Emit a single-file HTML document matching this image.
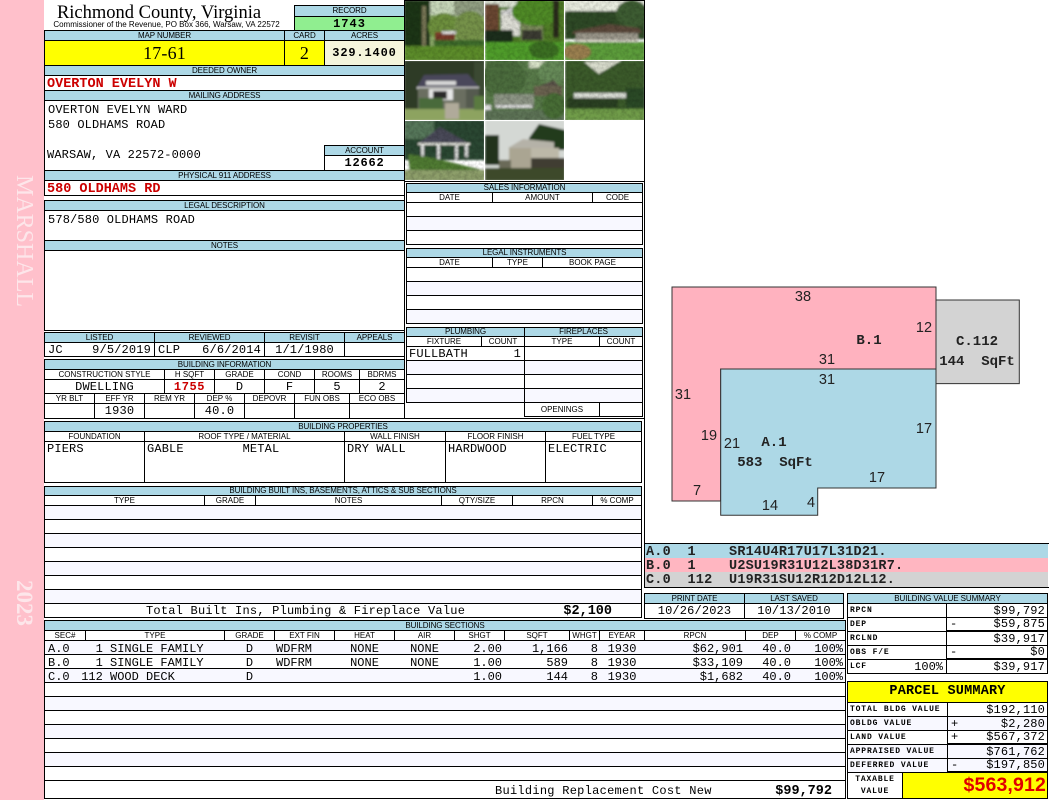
<!DOCTYPE html>
<html><head><meta charset="utf-8"><title>Richmond County, Virginia</title>
<style>
html,body{margin:0;padding:0;background:#fff}
#p{position:relative;width:1050px;height:800px;overflow:hidden;background:#fff;font-family:"Liberation Sans",sans-serif;color:#000}
#p div{position:absolute;box-sizing:border-box;white-space:pre;display:flex;align-items:center;justify-content:center;overflow:hidden}
.b{border:1px solid #000}
.h{border:1px solid #000;background:#add8e6;font:8px/1 "Liberation Sans",sans-serif;letter-spacing:-.1px}
.c{border:1px solid #000;background:#fff;font:8px/1 "Liberation Sans",sans-serif;letter-spacing:0}
.m{border:1px solid #000;background:#fff;font:12px/1 "Liberation Mono",monospace;letter-spacing:.15px}
.a{background:#f8f8ff}
.l{justify-content:flex-start!important;padding-left:2px}
.r{justify-content:flex-end!important;padding-right:2px}
.sb{justify-content:space-between!important;padding-left:3px}
.t{align-items:flex-start!important;padding-top:1px}
.red{color:#cc0000;font-weight:bold;font-size:13.5px!important;letter-spacing:0!important;padding-top:3px}
.s{font-size:8px;font-family:"Liberation Mono",monospace;font-weight:bold;letter-spacing:.85px}
.x{font:12px/1 "Liberation Mono",monospace;height:14px;padding-top:2px}
.k{left:645px;width:403px;justify-content:flex-start!important;font:bold 13.5px/1 "Liberation Mono",monospace;letter-spacing:.2px;color:#222;padding-left:1px;padding-top:3px}
svg{position:absolute}
</style></head><body><div id="p">

<div style="left:0;top:0;width:44px;height:800px;background:#ffc0cb"></div>
<div style="left:11px;top:171px;width:26px;height:140px;writing-mode:vertical-rl;font:24px/26px 'Liberation Serif',serif;color:#fde6ea">MARSHALL</div>
<div style="left:11px;top:578px;width:26px;height:50px;writing-mode:vertical-rl;font:bold 23px/26px 'Liberation Serif',serif;color:#fde6ea">2023</div>

<div style="left:44px;top:3px;width:230px;height:20px;font:18.5px/1 'Liberation Serif',serif">Richmond County, Virginia</div>
<div style="left:44px;top:20px;width:245px;height:10px;font:8px/1 'Liberation Sans',sans-serif;letter-spacing:0">Commissioner of the Revenue, PO Box 366, Warsaw, VA 22572</div>

<div class="h" style="left:294px;top:5px;width:111px;height:12px">RECORD</div>
<div class="m" style="left:294px;top:16px;width:111px;height:15px;background:#90ee90;font-weight:bold;letter-spacing:1px">1743</div>

<div class="h" style="left:44px;top:30px;width:241px;height:11px">MAP NUMBER</div>
<div class="h" style="left:284px;top:30px;width:41px;height:11px">CARD</div>
<div class="h" style="left:324px;top:30px;width:81px;height:11px">ACRES</div>
<div class="m" style="left:44px;top:40px;width:241px;height:26px;background:#ff0;font:18px/1 'Liberation Serif',serif">17-61</div>
<div class="m" style="left:284px;top:40px;width:41px;height:26px;background:#ff0;font:18px/1 'Liberation Serif',serif">2</div>
<div class="m" style="left:324px;top:40px;width:81px;height:26px;background:#f5f5dc;font-weight:bold;letter-spacing:.85px">329.1400</div>

<div class="h" style="left:44px;top:65px;width:361px;height:11px">DEEDED OWNER</div>
<div class="m l red" style="left:44px;top:75px;width:361px;height:16px">OVERTON EVELYN W</div>
<div class="h" style="left:44px;top:90px;width:361px;height:11px">MAILING ADDRESS</div>
<div class="m" style="left:44px;top:100px;width:361px;height:71px"></div>
<div style="left:48px;top:103px;width:200px;height:14px;justify-content:flex-start;font:12px/1 'Liberation Mono',monospace;letter-spacing:.13px">OVERTON EVELYN WARD</div>
<div style="left:48px;top:118px;width:200px;height:14px;justify-content:flex-start;font:12px/1 'Liberation Mono',monospace;letter-spacing:.13px">580 OLDHAMS ROAD</div>
<div style="left:47px;top:148px;width:220px;height:14px;justify-content:flex-start;font:12px/1 'Liberation Mono',monospace;letter-spacing:.13px">WARSAW, VA 22572-0000</div>
<div class="h" style="left:324px;top:145px;width:81px;height:11px">ACCOUNT</div>
<div class="m" style="left:324px;top:155px;width:81px;height:16px;font-weight:bold;letter-spacing:.8px">12662</div>
<div class="h" style="left:44px;top:170px;width:361px;height:11px">PHYSICAL 911 ADDRESS</div>
<div class="m l red" style="left:44px;top:180px;width:361px;height:16px">580 OLDHAMS RD</div>

<div class="h" style="left:44px;top:200px;width:361px;height:11px">LEGAL DESCRIPTION</div>
<div class="m l t" style="left:44px;top:210px;width:361px;height:31px;padding-left:3px;padding-top:3px">578/580 OLDHAMS ROAD</div>
<div class="h" style="left:44px;top:240px;width:361px;height:11px">NOTES</div>
<div class="m" style="left:44px;top:250px;width:361px;height:81px"></div>

<div class="h" style="left:44px;top:332px;width:111px;height:11px">LISTED</div>
<div class="h" style="left:154px;top:332px;width:111px;height:11px">REVIEWED</div>
<div class="h" style="left:264px;top:332px;width:81px;height:11px">REVISIT</div>
<div class="h" style="left:344px;top:332px;width:61px;height:11px">APPEALS</div>
<div class="m" style="left:44px;top:342px;width:111px;height:15px;padding:0 1px">JC    9/5/2019</div>
<div class="m" style="left:154px;top:342px;width:111px;height:15px;padding:0 1px">CLP   6/6/2014</div>
<div class="m" style="left:264px;top:342px;width:81px;height:15px">1/1/1980</div>
<div class="m" style="left:344px;top:342px;width:61px;height:15px"></div>

<div class="h" style="left:44px;top:359px;width:361px;height:11px">BUILDING INFORMATION</div>
<div class="c" style="left:44px;top:369px;width:121px;height:11px">CONSTRUCTION STYLE</div>
<div class="c" style="left:164px;top:369px;width:51px;height:11px">H SQFT</div>
<div class="c" style="left:214px;top:369px;width:51px;height:11px">GRADE</div>
<div class="c" style="left:264px;top:369px;width:51px;height:11px">COND</div>
<div class="c" style="left:314px;top:369px;width:46px;height:11px">ROOMS</div>
<div class="c" style="left:359px;top:369px;width:46px;height:11px">BDRMS</div>
<div class="m" style="left:44px;top:379px;width:121px;height:15px">DWELLING</div>
<div class="m red" style="left:164px;top:379px;width:51px;height:15px;font-size:12px!important;letter-spacing:.6px!important;padding-top:1px">1755</div>
<div class="m" style="left:214px;top:379px;width:51px;height:15px">D</div>
<div class="m" style="left:264px;top:379px;width:51px;height:15px">F</div>
<div class="m" style="left:314px;top:379px;width:46px;height:15px">5</div>
<div class="m" style="left:359px;top:379px;width:46px;height:15px">2</div>
<div class="c" style="left:44px;top:393px;width:51px;height:11px">YR BLT</div>
<div class="c" style="left:94px;top:393px;width:51px;height:11px">EFF YR</div>
<div class="c" style="left:144px;top:393px;width:51px;height:11px">REM YR</div>
<div class="c" style="left:194px;top:393px;width:51px;height:11px">DEP %</div>
<div class="c" style="left:244px;top:393px;width:51px;height:11px">DEPOVR</div>
<div class="c" style="left:294px;top:393px;width:56px;height:11px">FUN OBS</div>
<div class="c" style="left:349px;top:393px;width:56px;height:11px">ECO OBS</div>
<div class="m" style="left:44px;top:403px;width:51px;height:16px"></div>
<div class="m" style="left:94px;top:403px;width:51px;height:16px">1930</div>
<div class="m" style="left:144px;top:403px;width:51px;height:16px"></div>
<div class="m" style="left:194px;top:403px;width:51px;height:16px">40.0</div>
<div class="m" style="left:244px;top:403px;width:51px;height:16px"></div>
<div class="m" style="left:294px;top:403px;width:56px;height:16px"></div>
<div class="m" style="left:349px;top:403px;width:56px;height:16px"></div>

<div class="h" style="left:44px;top:421px;width:598px;height:11px">BUILDING PROPERTIES</div>
<div class="c" style="left:44px;top:431px;width:101px;height:11px">FOUNDATION</div>
<div class="c" style="left:144px;top:431px;width:201px;height:11px">ROOF TYPE / MATERIAL</div>
<div class="c" style="left:344px;top:431px;width:102px;height:11px">WALL FINISH</div>
<div class="c" style="left:445px;top:431px;width:101px;height:11px">FLOOR FINISH</div>
<div class="c" style="left:545px;top:431px;width:97px;height:11px">FUEL TYPE</div>
<div class="m l t" style="left:44px;top:441px;width:101px;height:42px">PIERS</div>
<div class="m l t" style="left:144px;top:441px;width:201px;height:42px">GABLE        METAL</div>
<div class="m l t" style="left:344px;top:441px;width:102px;height:42px">DRY WALL</div>
<div class="m l t" style="left:445px;top:441px;width:101px;height:42px">HARDWOOD</div>
<div class="m l t" style="left:545px;top:441px;width:97px;height:42px">ELECTRIC</div>

<div class="h" style="left:44px;top:486px;width:598px;height:10px">BUILDING BUILT INS, BASEMENTS, ATTICS &amp; SUB SECTIONS</div>
<div class="c" style="left:44px;top:495px;width:161px;height:11px">TYPE</div>
<div class="c" style="left:204px;top:495px;width:52px;height:11px">GRADE</div>
<div class="c" style="left:255px;top:495px;width:187px;height:11px">NOTES</div>
<div class="c" style="left:441px;top:495px;width:72px;height:11px">QTY/SIZE</div>
<div class="c" style="left:512px;top:495px;width:81px;height:11px">RPCN</div>
<div class="c" style="left:592px;top:495px;width:50px;height:11px">% COMP</div>
<div class="m a" style="left:44px;top:505px;width:598px;height:15px"></div>
<div class="m" style="left:44px;top:519px;width:598px;height:15px"></div>
<div class="m a" style="left:44px;top:533px;width:598px;height:15px"></div>
<div class="m" style="left:44px;top:547px;width:598px;height:15px"></div>
<div class="m a" style="left:44px;top:561px;width:598px;height:15px"></div>
<div class="m" style="left:44px;top:575px;width:598px;height:15px"></div>
<div class="m a" style="left:44px;top:589px;width:598px;height:15px"></div>
<div class="m" style="left:44px;top:603px;width:598px;height:15px"></div>
<div style="left:146px;top:604px;width:330px;height:14px;justify-content:flex-start;font:12px/1 'Liberation Mono',monospace;letter-spacing:.22px">Total Built Ins, Plumbing &amp; Fireplace Value</div>
<div style="left:540px;top:605px;width:72px;height:14px;justify-content:flex-end;font:bold 13.5px/1 'Liberation Mono',monospace">$2,100</div>

<div class="h" style="left:44px;top:620px;width:802px;height:11px">BUILDING SECTIONS</div>
<div class="c" style="left:44px;top:630px;width:42px;height:11px">SEC#</div>
<div class="c" style="left:85px;top:630px;width:140px;height:11px">TYPE</div>
<div class="c" style="left:224px;top:630px;width:51px;height:11px">GRADE</div>
<div class="c" style="left:274px;top:630px;width:61px;height:11px">EXT FIN</div>
<div class="c" style="left:334px;top:630px;width:61px;height:11px">HEAT</div>
<div class="c" style="left:394px;top:630px;width:61px;height:11px">AIR</div>
<div class="c" style="left:454px;top:630px;width:51px;height:11px">SHGT</div>
<div class="c" style="left:504px;top:630px;width:66px;height:11px">SQFT</div>
<div class="c" style="left:569px;top:630px;width:31px;height:11px">WHGT</div>
<div class="c" style="left:599px;top:630px;width:46px;height:11px">EYEAR</div>
<div class="c" style="left:644px;top:630px;width:102px;height:11px">RPCN</div>
<div class="c" style="left:745px;top:630px;width:51px;height:11px">DEP</div>
<div class="c" style="left:795px;top:630px;width:51px;height:11px">% COMP</div>

<div class="m a" style="left:44px;top:640px;width:802px;height:15px"></div>
<div class="m" style="left:44px;top:654px;width:802px;height:15px"></div>
<div class="m a" style="left:44px;top:668px;width:802px;height:15px"></div>
<div class="m" style="left:44px;top:682px;width:802px;height:15px"></div>
<div class="m a" style="left:44px;top:696px;width:802px;height:15px"></div>
<div class="m" style="left:44px;top:710px;width:802px;height:15px"></div>
<div class="m a" style="left:44px;top:724px;width:802px;height:15px"></div>
<div class="m" style="left:44px;top:738px;width:802px;height:15px"></div>
<div class="m a" style="left:44px;top:752px;width:802px;height:15px"></div>
<div class="m" style="left:44px;top:766px;width:802px;height:15px"></div>
<div class="m" style="left:44px;top:780px;width:802px;height:19px"></div>

<!-- section rows -->
<div class="x" style="left:48px;top:641px;width:30px;justify-content:flex-start">A.0</div>
<div class="x" style="left:48px;top:655px;width:30px;justify-content:flex-start">B.0</div>
<div class="x" style="left:48px;top:669px;width:30px;justify-content:flex-start">C.0</div>
<div class="x" style="left:74px;top:641px;width:146px;justify-content:flex-start">   1 SINGLE FAMILY</div>
<div class="x" style="left:74px;top:655px;width:146px;justify-content:flex-start">   1 SINGLE FAMILY</div>
<div class="x" style="left:74px;top:669px;width:146px;justify-content:flex-start"> 112 WOOD DECK</div>
<div class="x" style="left:224px;top:641px;width:51px">D</div>
<div class="x" style="left:224px;top:655px;width:51px">D</div>
<div class="x" style="left:224px;top:669px;width:51px">D</div>
<div class="x" style="left:276px;top:641px;width:60px;justify-content:flex-start">WDFRM</div>
<div class="x" style="left:276px;top:655px;width:60px;justify-content:flex-start">WDFRM</div>
<div class="x" style="left:334px;top:641px;width:61px">NONE</div>
<div class="x" style="left:334px;top:655px;width:61px">NONE</div>
<div class="x" style="left:394px;top:641px;width:61px">NONE</div>
<div class="x" style="left:394px;top:655px;width:61px">NONE</div>
<div class="x" style="left:450px;top:641px;width:52px;justify-content:flex-end">2.00</div>
<div class="x" style="left:450px;top:655px;width:52px;justify-content:flex-end">1.00</div>
<div class="x" style="left:450px;top:669px;width:52px;justify-content:flex-end">1.00</div>
<div class="x" style="left:510px;top:641px;width:58px;justify-content:flex-end">1,166</div>
<div class="x" style="left:510px;top:655px;width:58px;justify-content:flex-end">589</div>
<div class="x" style="left:510px;top:669px;width:58px;justify-content:flex-end">144</div>
<div class="x" style="left:570px;top:641px;width:28px;justify-content:flex-end">8</div>
<div class="x" style="left:570px;top:655px;width:28px;justify-content:flex-end">8</div>
<div class="x" style="left:570px;top:669px;width:28px;justify-content:flex-end">8</div>
<div class="x" style="left:600px;top:641px;width:44px">1930</div>
<div class="x" style="left:600px;top:655px;width:44px">1930</div>
<div class="x" style="left:600px;top:669px;width:44px">1930</div>
<div class="x" style="left:650px;top:641px;width:93px;justify-content:flex-end">$62,901</div>
<div class="x" style="left:650px;top:655px;width:93px;justify-content:flex-end">$33,109</div>
<div class="x" style="left:650px;top:669px;width:93px;justify-content:flex-end">$1,682</div>
<div class="x" style="left:745px;top:641px;width:51px;justify-content:flex-end;padding-right:5px">40.0</div>
<div class="x" style="left:745px;top:655px;width:51px;justify-content:flex-end;padding-right:5px">40.0</div>
<div class="x" style="left:745px;top:669px;width:51px;justify-content:flex-end;padding-right:5px">40.0</div>
<div class="x" style="left:800px;top:641px;width:43px;justify-content:flex-end">100%</div>
<div class="x" style="left:800px;top:655px;width:43px;justify-content:flex-end">100%</div>
<div class="x" style="left:800px;top:669px;width:43px;justify-content:flex-end">100%</div>
<div style="left:495px;top:784px;width:240px;height:14px;justify-content:flex-start;font:12px/1 'Liberation Mono',monospace;letter-spacing:.27px">Building Replacement Cost New</div>
<div style="left:760px;top:785px;width:72px;height:14px;justify-content:flex-end;font:bold 13.5px/1 'Liberation Mono',monospace">$99,792</div>

<!-- photos -->
<svg style="left:404px;top:0" width="241" height="181" viewBox="0 0 241 181">
<defs><filter id="bl" x="-5%" y="-5%" width="110%" height="110%"><feGaussianBlur stdDeviation="1"/></filter>
<filter id="nz" x="0" y="0" width="100%" height="100%"><feTurbulence type="fractalNoise" baseFrequency=".28" numOctaves="2" seed="7"/><feColorMatrix values="0 0 0 0 0  0 0 0 0 0  0 0 0 0 0  1.6 0 0 0 -.55"/></filter>
<clipPath id="c1"><rect x="1" y="1" width="79" height="59"/></clipPath><clipPath id="c2"><rect x="81" y="1" width="79" height="59"/></clipPath><clipPath id="c3"><rect x="161" y="1" width="79" height="59"/></clipPath>
<clipPath id="c4"><rect x="1" y="61" width="79" height="59"/></clipPath><clipPath id="c5"><rect x="81" y="61" width="79" height="59"/></clipPath><clipPath id="c6"><rect x="161" y="61" width="79" height="59"/></clipPath>
<clipPath id="c7"><rect x="1" y="121" width="79" height="59"/></clipPath><clipPath id="c8"><rect x="81" y="121" width="79" height="59"/></clipPath></defs>
<g clip-path="url(#c1)"><g filter="url(#bl)"><rect x="0" y="0" width="81" height="61" fill="#8fae6a"/><rect x="22" y="0" width="30" height="15" fill="#c6d6b8"/><rect x="50" y="0" width="31" height="16" fill="#8f9c80"/><rect x="0" y="0" width="26" height="47" fill="#1f3418"/><ellipse cx="40" cy="27" rx="16" ry="14" fill="#6d8f3e"/><ellipse cx="66" cy="28" rx="16" ry="17" fill="#75914a"/><rect x="18" y="6" width="4" height="46" fill="#7d7a5a"/><rect x="30" y="40" width="51" height="6" fill="#3e6a2c"/><rect x="31" y="32" width="20" height="8" fill="#7a3a2a"/><rect x="38" y="31" width="14" height="3" fill="#ddd"/><rect x="0" y="46" width="81" height="15" fill="#5c8c2c"/></g></g>
<g clip-path="url(#c2)"><g filter="url(#bl)"><rect x="81" y="0" width="80" height="61" fill="#4f7a28"/><rect x="81" y="0" width="32" height="7" fill="#d8e0d0"/><rect x="81" y="4" width="14" height="28" fill="#6b4630"/><rect x="97" y="10" width="19" height="26" fill="#dcdcd4"/><path d="M96 14L107 7L117 14Z" fill="#cfcfcf"/><rect x="117" y="22" width="22" height="18" fill="#7c8a5c"/><rect x="118" y="30" width="20" height="10" fill="#3a3a30"/><rect x="81" y="30" width="28" height="12" fill="#1f2e1a"/><ellipse cx="132" cy="12" rx="24" ry="14" fill="#4f8a28"/><rect x="149" y="0" width="6" height="38" fill="#2a2a1a"/><rect x="81" y="42" width="80" height="19" fill="#4f9c2c"/><ellipse cx="140" cy="50" rx="15" ry="9" fill="#3a6e22"/></g></g>
<g clip-path="url(#c3)"><g filter="url(#bl)"><rect x="161" y="0" width="80" height="15" fill="#e8ecdf"/><rect x="161" y="11" width="80" height="28" fill="#2f4a26"/><ellipse cx="228" cy="14" rx="16" ry="14" fill="#3e5c30"/><path d="M170 31L205 24L235 28L238 33L168 34Z" fill="#5c4a3a"/><rect x="172" y="33" width="62" height="8" fill="#9a968a"/><rect x="174" y="40" width="60" height="2" fill="#e0dcd0"/><rect x="161" y="42" width="80" height="19" fill="#5c9c3a"/><ellipse cx="173" cy="52" rx="14" ry="8" fill="#9a7f50"/></g></g>
<g clip-path="url(#c4)"><g filter="url(#bl)"><rect x="0" y="60" width="81" height="50" fill="#2e3a26"/><rect x="70" y="62" width="11" height="40" fill="#3a4a30"/><path d="M13 87L20 75L64 74L75 87Z" fill="#48475a"/><rect x="13" y="87" width="62" height="2" fill="#ddd"/><rect x="22" y="81" width="30" height="4" fill="#d8d8d8"/><rect x="14" y="88" width="58" height="21" fill="#6a6e60"/><rect x="25" y="89" width="24" height="11" fill="#e6e6e6"/><rect x="29" y="91" width="14" height="8" fill="#2c2c2c"/><rect x="62" y="88" width="13" height="20" fill="#555a50"/><rect x="15" y="98" width="24" height="12" fill="#4a6a3a"/><rect x="0" y="109" width="81" height="12" fill="#8da360"/><rect x="41" y="103" width="14" height="16" fill="#b0aa9a"/><rect x="70" y="96" width="10" height="14" fill="#5a7a40"/></g></g>
<g clip-path="url(#c5)"><g filter="url(#bl)"><rect x="81" y="60" width="80" height="61" fill="#587a4a"/><rect x="125" y="61" width="25" height="7" fill="#d8e2c8"/><ellipse cx="100" cy="78" rx="22" ry="20" fill="#4c6c3c"/><ellipse cx="148" cy="72" rx="14" ry="12" fill="#668a58"/><path d="M130 88L150 80L158 90Z" fill="#5a5248"/><rect x="130" y="86" width="28" height="10" fill="#6a6250"/><rect x="90" y="94" width="40" height="14" fill="#8c9484"/><rect x="92" y="105" width="36" height="3" fill="#dcdcdc"/><rect x="81" y="105" width="6" height="6" fill="#e0e0e0"/><rect x="81" y="110" width="80" height="11" fill="#5d7357"/><ellipse cx="150" cy="106" rx="12" ry="13" fill="#466c34"/></g></g>
<g clip-path="url(#c6)"><g filter="url(#bl)"><rect x="161" y="60" width="80" height="50" fill="#3a5a2a"/><path d="M180 62L218 60L195 74Z" fill="#d8dccc"/><rect x="170" y="93" width="56" height="5" fill="#d8dcd4"/><rect x="164" y="98" width="50" height="10" fill="#2a4020"/><rect x="222" y="88" width="19" height="20" fill="#294a26"/><rect x="161" y="109" width="80" height="12" fill="#6f9c4a"/></g></g>
<g clip-path="url(#c7)"><g filter="url(#bl)"><rect x="0" y="120" width="81" height="40" fill="#2c4630"/><rect x="0" y="121" width="30" height="18" fill="#56775a"/><path d="M36 127L13 144L66 144Z" fill="#4a4a58"/><rect x="14" y="143" width="52" height="2" fill="#e8e8e0"/><rect x="17" y="145" width="3" height="14" fill="#ddd"/><rect x="33" y="145" width="3" height="18" fill="#ddd"/><rect x="51" y="145" width="3" height="14" fill="#ddd"/><rect x="61" y="145" width="3" height="12" fill="#ddd"/><path d="M4 154L30 158L78 170L6 172Z" fill="#4f7a30"/><rect x="0" y="170" width="81" height="11" fill="#8d9e6a"/></g></g>
<g clip-path="url(#c8)"><g filter="url(#bl)"><rect x="81" y="120" width="80" height="61" fill="#d4d8d4"/><rect x="81" y="135" width="14" height="30" fill="#22301c"/><path d="M125 138L135 124L161 130L161 150L125 150Z" fill="#233a1c"/><path d="M104 148L119 139L150 142L150 148Z" fill="#b5b2a8"/><rect x="105" y="148" width="22" height="22" fill="#aaa592"/><rect x="127" y="148" width="28" height="10" fill="#bcb8a8"/><rect x="127" y="158" width="34" height="10" fill="#403c30"/><rect x="95" y="160" width="12" height="10" fill="#6a6a58"/><rect x="81" y="168" width="80" height="13" fill="#3e4a2c"/></g></g>
<g clip-path="url(#c1)"><rect x="1" y="1" width="79" height="59" filter="url(#nz)" opacity=".2"/></g>
<g clip-path="url(#c2)"><rect x="81" y="1" width="79" height="59" filter="url(#nz)" opacity=".2"/></g>
<g clip-path="url(#c3)"><rect x="161" y="1" width="79" height="59" filter="url(#nz)" opacity=".2"/></g>
<g clip-path="url(#c5)"><rect x="81" y="61" width="79" height="59" filter="url(#nz)" opacity=".2"/></g>
<g clip-path="url(#c6)"><rect x="161" y="61" width="79" height="59" filter="url(#nz)" opacity=".2"/></g>
<g clip-path="url(#c7)"><rect x="1" y="121" width="79" height="59" filter="url(#nz)" opacity=".2"/></g>
</svg>

<div style="left:404px;top:0;width:241px;height:1px;background:#000"></div>
<div style="left:404px;top:0;width:1px;height:181px;background:#000"></div>
<div style="left:644px;top:0;width:1px;height:545px;background:#000"></div>

<!-- Sales -->
<div class="b" style="left:404px;top:181px;width:241px;height:238px;background:none"></div>
<div class="h" style="left:406px;top:183px;width:237px;height:10px">SALES INFORMATION</div>
<div class="c" style="left:406px;top:192px;width:87px;height:11px">DATE</div>
<div class="c" style="left:492px;top:192px;width:101px;height:11px">AMOUNT</div>
<div class="c" style="left:592px;top:192px;width:51px;height:11px">CODE</div>
<div class="m" style="left:406px;top:202px;width:237px;height:15px"></div>
<div class="m a" style="left:406px;top:216px;width:237px;height:15px"></div>
<div class="m" style="left:406px;top:230px;width:237px;height:15px"></div>
<div class="h" style="left:406px;top:248px;width:237px;height:10px">LEGAL INSTRUMENTS</div>
<div class="c" style="left:406px;top:257px;width:87px;height:11px">DATE</div>
<div class="c" style="left:492px;top:257px;width:51px;height:11px">TYPE</div>
<div class="c" style="left:542px;top:257px;width:101px;height:11px">BOOK PAGE</div>
<div class="m" style="left:406px;top:267px;width:237px;height:15px"></div>
<div class="m a" style="left:406px;top:281px;width:237px;height:15px"></div>
<div class="m" style="left:406px;top:295px;width:237px;height:15px"></div>
<div class="m a" style="left:406px;top:309px;width:237px;height:15px"></div>
<div class="h" style="left:406px;top:327px;width:119px;height:10px">PLUMBING</div>
<div class="h" style="left:524px;top:327px;width:119px;height:10px">FIREPLACES</div>
<div class="c" style="left:406px;top:336px;width:76px;height:11px">FIXTURE</div>
<div class="c" style="left:481px;top:336px;width:44px;height:11px">COUNT</div>
<div class="c" style="left:524px;top:336px;width:76px;height:11px">TYPE</div>
<div class="c" style="left:599px;top:336px;width:44px;height:11px">COUNT</div>
<div class="m" style="left:406px;top:346px;width:119px;height:15px;justify-content:space-between;padding:0 3px 0 2px"><span>FULLBATH</span><span>1</span></div>
<div class="m a" style="left:406px;top:360px;width:119px;height:15px"></div>
<div class="m" style="left:406px;top:374px;width:119px;height:15px"></div>
<div class="m a" style="left:406px;top:388px;width:119px;height:15px"></div>
<div class="m" style="left:524px;top:346px;width:119px;height:15px"></div>
<div class="m a" style="left:524px;top:360px;width:119px;height:15px"></div>
<div class="m" style="left:524px;top:374px;width:119px;height:15px"></div>
<div class="m a" style="left:524px;top:388px;width:119px;height:15px"></div>
<div class="c" style="left:524px;top:402px;width:76px;height:15px">OPENINGS</div>
<div class="c" style="left:599px;top:402px;width:44px;height:15px"></div>

<!-- sketch -->
<svg style="left:660px;top:280px" width="380" height="240" viewBox="660 280 380 240">
<path d="M672 287H936V369H720.7V501H672Z" fill="#ffb2bf" stroke="#333" stroke-width="1"/>
<path d="M936 300H1019.3V383.6H936Z" fill="#d3d3d3" stroke="#333" stroke-width="1"/>
<path d="M720.7 369H936V488H817.7V515.3H720.7Z" fill="#add8e6" stroke="#333" stroke-width="1"/>
<g font-family="Liberation Sans, sans-serif" font-size="14.5" fill="#222" text-anchor="middle">
<text x="803" y="301">38</text><text x="924" y="332">12</text><text x="827" y="364">31</text><text x="827" y="384">31</text><text x="683" y="399">31</text><text x="709" y="440">19</text><text x="732" y="448">21</text><text x="924" y="433">17</text><text x="877" y="482">17</text><text x="697" y="495">7</text><text x="770" y="510">14</text><text x="811" y="507">4</text></g>
<g font-family="Liberation Mono, monospace" font-size="14" font-weight="bold" fill="#222" text-anchor="middle">
<text x="869" y="344">B.1</text><text x="977" y="345">C.112</text><text x="977" y="365">144&#160;&#160;SqFt</text><text x="774" y="446">A.1</text><text x="775" y="466">583&#160;&#160;SqFt</text></g>
</svg>

<!-- sketch key -->
<div style="left:644px;top:543px;width:405px;height:1px;background:#000"></div>
<div class="k" style="top:544px;height:14px;background:#add8e6">A.0  1    SR14U4R17U17L31D21.</div>
<div class="k" style="top:558px;height:14px;background:#ffb6c1">B.0  1    U2SU19R31U12L38D31R7.</div>
<div class="k" style="top:572px;height:15px;background:#d3d3d3">C.0  112  U19R31SU12R12D12L12.</div>
<div style="left:644px;top:587px;width:405px;height:1px;background:#000"></div>
<div style="left:644px;top:543px;width:1px;height:45px;background:#000"></div>

<!-- dates -->
<div class="h" style="left:644px;top:593px;width:101px;height:11px">PRINT DATE</div>
<div class="h" style="left:744px;top:593px;width:100px;height:11px">LAST SAVED</div>
<div class="m" style="left:644px;top:603px;width:101px;height:16px">10/26/2023</div>
<div class="m" style="left:744px;top:603px;width:100px;height:16px">10/13/2010</div>

<!-- value summary -->
<div class="h" style="left:847px;top:593px;width:201px;height:11px">BUILDING VALUE SUMMARY</div>
<div class="m l s" style="left:847px;top:603px;width:100px;height:15px">RPCN</div>
<div class="m r" style="left:946px;top:603px;width:102px;height:15px">$99,792</div>
<div class="m l s" style="left:847px;top:617px;width:100px;height:15px">DEP</div>
<div class="m r sb" style="left:946px;top:617px;width:102px;height:15px;border-bottom-width:2px"><span>-</span><span>$59,875</span></div>
<div class="m l s" style="left:847px;top:631px;width:100px;height:15px">RCLND</div>
<div class="m r" style="left:946px;top:631px;width:102px;height:15px">$39,917</div>
<div class="m l s" style="left:847px;top:645px;width:100px;height:15px">OBS F/E</div>
<div class="m r sb" style="left:946px;top:645px;width:102px;height:15px;border-bottom-width:2px"><span>-</span><span>$0</span></div>
<div class="m s" style="left:847px;top:659px;width:100px;height:15px;justify-content:space-between;padding:0 3px 0 2px"><span>LCF</span><span style="font:12px/1 'Liberation Mono',monospace;letter-spacing:0">100%</span></div>
<div class="m r" style="left:946px;top:659px;width:102px;height:15px">$39,917</div>

<!-- parcel summary -->
<div class="m" style="left:847px;top:681px;width:201px;height:22px;background:#ff0;font:bold 13.5px/1 'Liberation Mono',monospace;letter-spacing:.2px">PARCEL SUMMARY</div>
<div class="m l s" style="left:847px;top:702px;width:101px;height:15px">TOTAL BLDG VALUE</div>
<div class="m r" style="left:947px;top:702px;width:101px;height:15px">$192,110</div>
<div class="m l s a" style="left:847px;top:716px;width:101px;height:15px">OBLDG VALUE</div>
<div class="m r sb a" style="left:947px;top:716px;width:101px;height:15px"><span>+</span><span>$2,280</span></div>
<div class="m l s" style="left:847px;top:730px;width:101px;height:15px">LAND VALUE</div>
<div class="m r sb" style="left:947px;top:730px;width:101px;height:15px;border-bottom-width:2px"><span>+</span><span>$567,372</span></div>
<div class="m l s a" style="left:847px;top:744px;width:101px;height:15px">APPRAISED VALUE</div>
<div class="m r a" style="left:947px;top:744px;width:101px;height:15px">$761,762</div>
<div class="m l s a" style="left:847px;top:758px;width:101px;height:15px">DEFERRED VALUE</div>
<div class="m r sb a" style="left:947px;top:758px;width:101px;height:15px;border-bottom-width:2px"><span>-</span><span>$197,850</span></div>
<div class="m s" style="left:847px;top:772px;width:56px;height:27px;text-align:center;line-height:12px;font-size:8px">TAXABLE
VALUE</div>
<div class="m r" style="left:902px;top:772px;width:146px;height:27px;background:#ff0;color:#e00000;font:bold 19.5px/1 'Liberation Sans',sans-serif;padding-right:1px">$563,912</div>

</div></body></html>
